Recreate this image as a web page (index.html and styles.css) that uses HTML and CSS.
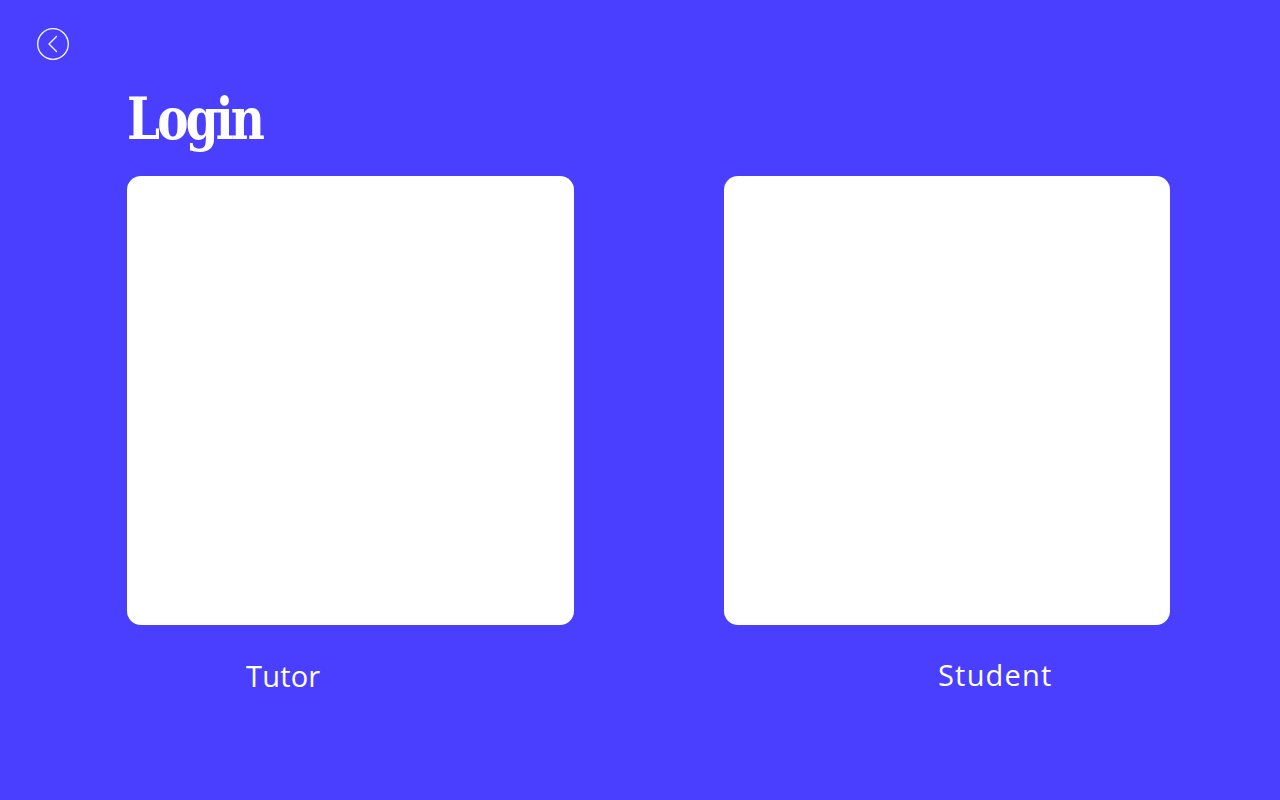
FILE: index.html
```html
<!DOCTYPE html>
<html lang="en">
<head>
<meta charset="utf-8">
<title>Login</title>
<link rel="stylesheet" href="styles.css">
</head>
<body>
<div class="page">
  <header class="topbar">
    <button class="back" aria-label="Back">
      <svg width="34" height="34" viewBox="0 0 34 34" fill="none" stroke="#fff" stroke-width="1.3">
        <circle cx="17" cy="17" r="15.3"/>
        <polyline points="20.5,9.5 13,17 20.5,24.5" stroke-linecap="round" stroke-linejoin="round"/>
      </svg>
    </button>
  </header>
  <main class="content">
    <h1 class="title">Login</h1>
    <div class="choices">
      <div class="choice">
        <div class="card"></div>
        <div class="label label-tutor">Tutor</div>
      </div>
      <div class="choice choice-right">
        <div class="card"></div>
        <div class="label label-student">Student</div>
      </div>
    </div>
  </main>
</div>
</body>
</html>
```

FILE: styles.css
```css
* { box-sizing: border-box; }
html, body {
  margin: 0;
  padding: 0;
  background: #4a3eff;
  height: 100%;
}
.page {
  width: 1280px;
  height: 800px;
  background: #4a3eff;
  color: #fff;
  font-family: "Open Sans", "Liberation Sans", sans-serif;
  overflow: hidden;
}
.topbar {
  padding: 27px 0 0 36px;
  height: 61px;
}
.back {
  display: block;
  width: 34px;
  height: 34px;
  padding: 0;
  border: 0;
  background: none;
  cursor: pointer;
}
.back svg { display: block; }
.content {
  padding: 0 0 0 127px;
}
.title {
  margin: 16px 0 0 0;
  font-family: "DejaVu Serif", "Liberation Serif", serif;
  font-weight: bold;
  font-size: 58px;
  line-height: 84px;
  letter-spacing: -3.5px;
  height: 99px;
  transform: scaleX(0.81);
  transform-origin: left center;
}
.choices {
  display: flex;
  gap: 150px;
}
.choice {
  width: 447px;
}
.choice-right { width: 446px; }
.card {
  width: 100%;
  height: 449px;
  background: #fff;
  border-radius: 14px;
}
.label {
  margin-top: 31px;
  font-family: "Open Sans", "Liberation Sans", sans-serif;
  font-size: 29px;
  line-height: 40px;
  font-weight: 400;
}
.label-tutor { padding-left: 119px; letter-spacing: 0.2px; }
.label-student { padding-left: 214px; margin-top: 30px; letter-spacing: 1.2px; }
```
